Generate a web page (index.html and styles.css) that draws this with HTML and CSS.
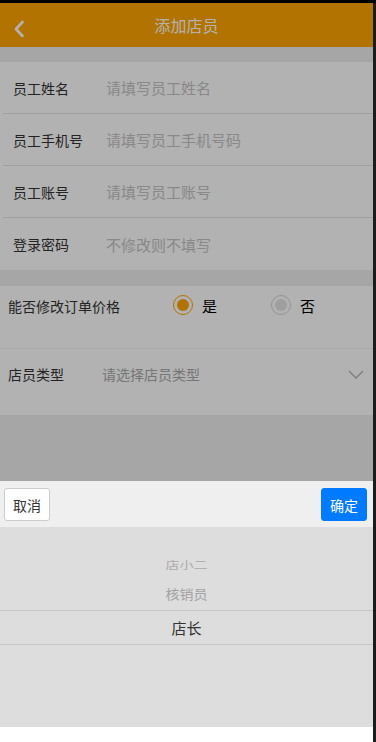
FILE: index.html
```html
<!DOCTYPE html>
<html lang="zh-CN">
<head>
    <meta charset="UTF-8">
    <meta name="viewport" content="width=device-width, initial-scale=1">
    <title>添加店员</title>
    <link rel="stylesheet" href="styles.css">
</head>
<body>
    <div class="page">
        <div class="header">
            <a class="back" href="#">
                <svg width="12" height="18" viewBox="0 0 12 18">
                    <polyline points="9.5,2 3,9 9.5,16" fill="none" stroke="#fff" stroke-width="2.6" stroke-linecap="round" stroke-linejoin="round"/>
                </svg>
            </a>
            <h1>添加店员</h1>
        </div>

        <div class="form-group">
            <div class="form-row">
                <label>员工姓名</label>
                <input type="text" placeholder="请填写员工姓名">
            </div>
            <div class="form-row">
                <label>员工手机号</label>
                <input type="text" placeholder="请填写员工手机号码">
            </div>
            <div class="form-row">
                <label>员工账号</label>
                <input type="text" placeholder="请填写员工账号">
            </div>
            <div class="form-row">
                <label>登录密码</label>
                <input type="password" placeholder="不修改则不填写">
            </div>
        </div>

        <div class="form-group">
            <div class="switch-row">
                <span class="label">能否修改订单价格</span>
                <div class="radios">
                    <span class="radio checked"><i></i>是</span>
                    <span class="radio"><i></i>否</span>
                </div>
            </div>
            <div class="select-row">
                <span class="label">店员类型</span>
                <span class="select-text">请选择店员类型</span>
                <svg class="arrow" width="16" height="9" viewBox="0 0 16 9">
                    <polyline points="1,1 8,8 15,1" fill="none" stroke="#bbb" stroke-width="1.6"/>
                </svg>
            </div>
        </div>
    </div>

    <div class="overlay">
        <div class="mask"></div>
        <div class="picker">
            <div class="picker-bar">
                <button class="btn-cancel">取消</button>
                <button class="btn-ok">确定</button>
            </div>
            <div class="wheel">
                <div class="item far">店小二</div>
                <div class="item near">核销员</div>
                <div class="item current">店长</div>
            </div>
        </div>
    </div>
</body>
</html>
```

FILE: styles.css
```css
body {
    margin: 0;
    padding: 0;
    background-color: #1c1c1c;
    border-top: 3px solid #000;
    font-family: "Noto Sans CJK SC", "Noto Sans", sans-serif;
}

.page {
    width: 373px;
    height: 739px;
    background-color: #eee;
}

.header {
    height: 44px;
    background-color: #ffa500;
    display: flex;
    align-items: center;
    justify-content: center;
    position: relative;
}

.header h1 {
    margin: 0;
    font-size: 16px;
    font-weight: normal;
    color: #fff;
}

.back {
    position: absolute;
    left: 13px;
    top: 16px;
    display: block;
    height: 18px;
}

.form-group {
    background-color: #fff;
    margin-top: 15px;
}

.form-group + .form-group {
    margin-top: 16px;
}

.form-row {
    display: flex;
    align-items: center;
    height: 52px;
    box-sizing: border-box;
    margin-left: 3px;
    padding-left: 10px;
    border-bottom: 1px solid #e6e6e6;
}

.form-row:last-child {
    border-bottom: none;
}

.form-row label {
    width: 93px;
    font-size: 14px;
    color: #333;
}

.form-row input {
    flex: 1;
    border: none;
    outline: none;
    background: transparent;
    font-family: inherit;
    font-size: 15px;
    padding: 0;
    color: #333;
}

.form-row input::placeholder {
    color: #c4c4c4;
}

.label {
    font-size: 14px;
    color: #333;
    line-height: 20px;
    flex-shrink: 0;
}

.switch-row {
    display: flex;
    align-items: flex-start;
    height: 63px;
    box-sizing: border-box;
    padding: 9px 8px 0;
    border-bottom: 1px solid #f2f2f2;
}

.switch-row .label {
    width: 165px;
    margin-top: 1px;
}

.radios {
    display: flex;
}

.radio {
    display: flex;
    align-items: center;
    height: 20px;
    width: 98px;
    font-size: 15px;
    color: #000;
}

.radio:last-child {
    width: auto;
}

.radio i {
    flex-shrink: 0;
    width: 20px;
    height: 20px;
    box-sizing: border-box;
    border: 1.5px solid #d4d4d4;
    border-radius: 50%;
    margin-right: 9px;
    display: flex;
    align-items: center;
    justify-content: center;
}

.radio i::after {
    content: "";
    width: 12px;
    height: 12px;
    border-radius: 50%;
    background-color: #e4e4e4;
}

.radio.checked i {
    border-color: #ffa500;
}

.radio.checked i::after {
    background-color: #ffa500;
}

.select-row {
    display: flex;
    align-items: flex-start;
    height: 66px;
    box-sizing: border-box;
    padding: 15px 9px 0 8px;
}

.select-row .label {
    width: 94px;
}

.select-text {
    flex: 1;
    font-size: 14px;
    line-height: 20px;
    color: #aaa;
}

.arrow {
    margin-top: 6px;
}

.overlay {
    position: fixed;
    top: 3px;
    left: 0;
    bottom: 0;
    width: 373px;
    display: flex;
    flex-direction: column;
}

.mask {
    flex: 1;
    background-color: rgba(0, 0, 0, 0.3);
}

.picker {
    background-color: #fff;
    padding-bottom: 15px;
}

.picker-bar {
    height: 46px;
    background-color: #efefef;
    display: flex;
    justify-content: space-between;
    align-items: flex-start;
    padding: 7px 6px 0 4px;
    box-sizing: border-box;
}

.picker-bar button {
    width: 46px;
    height: 33px;
    padding: 0;
    border-radius: 3px;
    font-family: inherit;
    font-size: 14px;
    cursor: pointer;
}

.btn-cancel {
    background-color: #fff;
    border: 1px solid #ccc;
    color: #333;
}

.btn-ok {
    background-color: #007aff;
    border: 1px solid #007aff;
    color: #fff;
    font-size: 13px;
}

.wheel {
    height: 200px;
    box-sizing: border-box;
    background-color: #ddd;
    padding-top: 24px;
    text-align: center;
}

.item {
    height: 28px;
    line-height: 28px;
    font-size: 14px;
}

.item.far {
    color: #aaa;
    transform: scaleY(0.72);
}

.item.near {
    color: #a2a2a2;
    transform: scaleY(0.92);
}

.item.current {
    margin-top: 3px;
    height: 35px;
    line-height: 33px;
    box-sizing: border-box;
    border-top: 1px solid #c6c6c6;
    border-bottom: 1px solid #c6c6c6;
    color: #333;
    font-size: 15px;
}
```
